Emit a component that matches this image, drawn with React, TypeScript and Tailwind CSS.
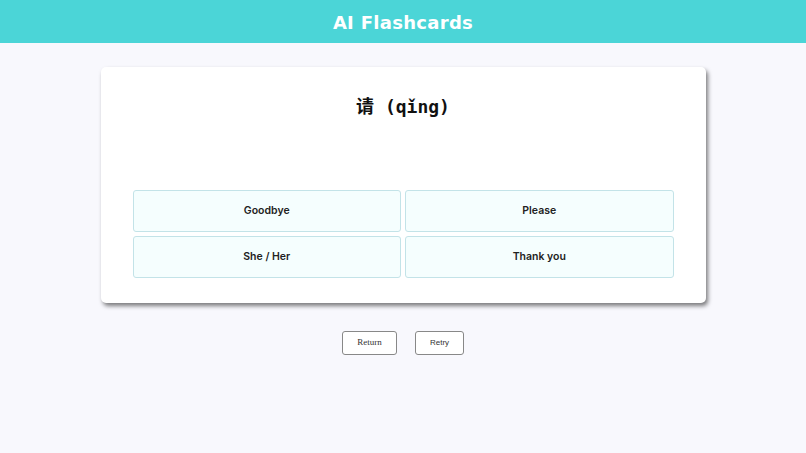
import React from 'react';

const options = ['Goodbye', 'Please', 'She / Her', 'Thank you'];

export default function App() {
  return (
    <div className="min-h-screen bg-[#f8f8fd] font-['Inter',sans-serif]">
      {/* Header */}
      <header className="h-[43px] bg-[#4bd5d7] flex items-center justify-center">
        <h1 className="text-white text-[18px] font-black tracking-[0.3px] font-['DejaVu_Sans',sans-serif] leading-none pt-[2px]">
          AI Flashcards
        </h1>
      </header>

      {/* Card */}
      <div className="pt-6 flex justify-center">
        <div className="w-[605px] bg-white rounded-[5px] shadow-[2px_3px_4px_rgba(0,0,0,0.5)] px-8 pt-[26px] pb-[25px]">
          <div className="text-center text-[18px] font-bold text-[#111] leading-[28px] font-['DejaVu_Sans_Mono','Noto_Sans_CJK_SC',monospace]">
            请 (qǐng)
          </div>
          <div className="mt-[69px] grid grid-cols-2 gap-1">
            {options.map(o => (
              <button
                key={o}
                className="h-[42px] bg-[#f5fefe] border border-[#c3e3e8] rounded-[3px] text-[10.5px] font-semibold text-[#222]"
              >
                {o}
              </button>
            ))}
          </div>
        </div>
      </div>

      {/* Actions */}
      <div className="mt-[28px] flex justify-center gap-[18px]">
        <button className="w-[55px] h-[24px] bg-white border border-[#888] rounded-[3px] text-[9px] text-[#333] font-['Liberation_Serif',serif]">
          Return
        </button>
        <button className="w-[49px] h-[24px] bg-white border border-[#888] rounded-[3px] text-[8px] text-[#333] font-['Liberation_Sans',sans-serif]">
          Retry
        </button>
      </div>
    </div>
  );
}
